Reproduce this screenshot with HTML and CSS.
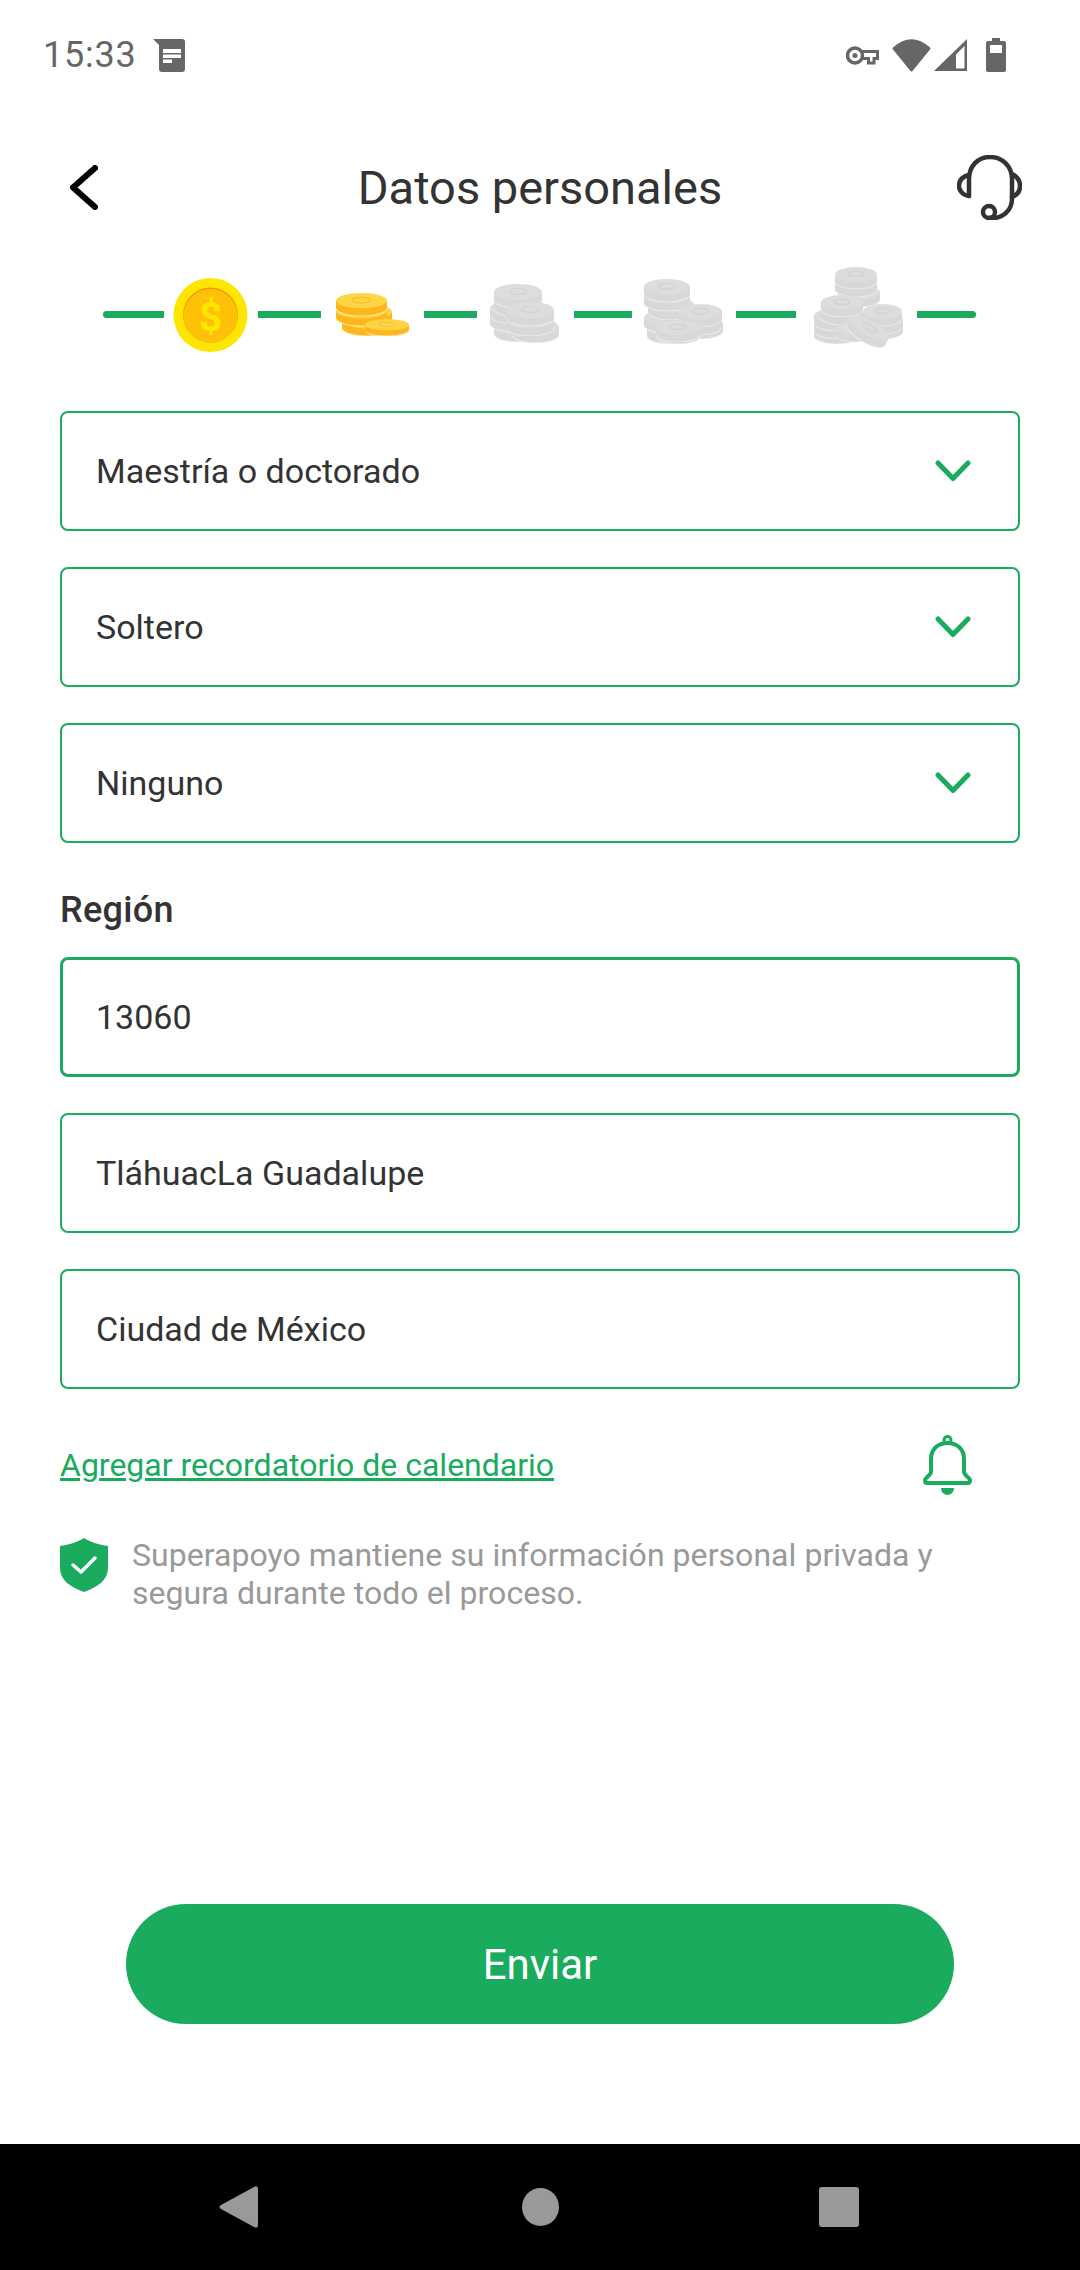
FILE: index.html
```html
<!DOCTYPE html>
<html lang="es">
<head>
    <meta charset="UTF-8">
    <meta name="viewport" content="width=device-width, initial-scale=1.0">
    <title>Datos personales</title>
    <link rel="stylesheet" href="styles.css">
</head>
<body>
    <svg class="defs" width="0" height="0">
        <symbol id="coin" viewBox="0 0 50 24" preserveAspectRatio="none">
            <path d="M0 8V16C0 20 11 24 25 24S50 20 50 16V8Z" fill="currentColor"/>
            <ellipse cx="25" cy="8" rx="25" ry="8" fill="var(--coin-top)"/>
            <path d="M0 16C0 20 11 24 25 24S50 20 50 16" fill="none" stroke="var(--coin-seam)" stroke-width="1"/>
            <ellipse cx="25" cy="7.5" rx="9" ry="3" fill="none" stroke="var(--coin-mark)" stroke-width="1.2"/>
        </symbol>
    </svg>

    <div class="page">
        <div class="status-bar">
            <span class="time">15:33</span>
            <svg class="doc-icon" width="32" height="33" viewBox="0 0 32 33">
                <path d="M0 0H29A3 3 0 0 1 32 3V30A3 3 0 0 1 29 33H9A3 3 0 0 1 6 30V6Z" fill="#666"/>
                <path d="M10 10H28V14H10ZM10 15.5H28V19H10ZM10 20.5H19V24H10Z" fill="#fff"/>
            </svg>
            <div class="status-right">
                <svg width="33" height="19" viewBox="0 0 33 19">
                    <circle cx="9" cy="9.5" r="7.5" fill="none" stroke="#666" stroke-width="3.5"/>
                    <circle cx="9" cy="9.5" r="2.5" fill="#666"/>
                    <path d="M16 5.5H31.5V12.5H28V17H22.5V12.5H16" fill="none" stroke="#666" stroke-width="3"/>
                </svg>
                <svg class="wifi" width="39" height="33" viewBox="0 0 39 33">
                    <path d="M1 8.5Q19.5-8 38 8.5Q39 9.500 38 10.500L20.500 32Q19.500 33 18.500 32L1 10.500Q0 9.500 1 8.500Z" fill="#666"/>
                </svg>
                <svg class="signal" width="33" height="32" viewBox="0 0 33 32">
                    <path d="M33 0V32H0Z" fill="#666"/>
                    <path d="M30.5 7V29.5H22V15.5Z" fill="#fff"/>
                </svg>
                <svg class="battery" width="20" height="34" viewBox="0 0 20 34">
                    <path d="M6 0H14V3H18A2 2 0 0 1 20 5V32A2 2 0 0 1 18 34H2A2 2 0 0 1 0 32V5A2 2 0 0 1 2 3H6Z" fill="#666"/>
                    <rect x="4" y="7" width="12" height="8" fill="#fff"/>
                </svg>
            </div>
        </div>

        <div class="header">
            <svg class="back" width="28" height="45" viewBox="0 0 28 45">
                <path d="M25 3L3 22.5L25 42" fill="none" stroke="#000" stroke-width="6" stroke-linecap="round" stroke-linejoin="round"/>
            </svg>
            <h1 class="title">Datos personales</h1>
            <svg class="headset" width="65" height="65" viewBox="0 0 65 65" fill="none" stroke="#333" stroke-width="4.500" stroke-linecap="round">
                <path d="M12 41V24C12 11 21 2 33 2S55 11 55 24V44C55 55 46 63 36 63H32"/>
                <path d="M12 20C4 22 2 27 2 31S5 40 12 41"/>
                <path d="M55 19C61 22 63 26 63 31S60 40 55 42"/>
                <circle cx="32" cy="57" r="6"/>
            </svg>
        </div>

        <div class="stepper">
            <span class="line line-first"></span>
            <svg width="94" height="100" viewBox="164 264 94 100">
                <circle cx="210.5" cy="315" r="37" fill="#ffe600"/>
                <circle cx="210.5" cy="315" r="27.5" fill="#f59a00"/>
                <circle cx="210.5" cy="316" r="27" fill="#ffc107"/>
                <text x="210.5" y="330.5" text-anchor="middle" class="dollar">$</text>
            </svg>
            <span class="line line-2"></span>
            <svg class="coins gold" width="103" height="100" viewBox="321 264 103 100">
                <use href="#coin" x="342" y="313" width="50" height="23"/>
                <use href="#coin" x="342" y="304" width="50" height="23"/>
                <use href="#coin" x="336" y="303" width="51" height="23"/>
                <use href="#coin" x="336" y="293" width="51" height="23"/>
                <use href="#coin" x="365" y="319" width="44" height="17"/>
            </svg>
            <span class="line line-3"></span>
            <svg class="coins gray" width="97" height="100" viewBox="477 264 97 100">
                <use href="#coin" x="494" y="319" width="48" height="23"/>
                <use href="#coin" x="490" y="308" width="48" height="24"/>
                <use href="#coin" x="490" y="300" width="48" height="24"/>
                <use href="#coin" x="494" y="293" width="48" height="24"/>
                <use href="#coin" x="494" y="284" width="48" height="24"/>
                <use href="#coin" x="512" y="319" width="47" height="24"/>
                <use href="#coin" x="506" y="312" width="48" height="24"/>
                <use href="#coin" x="506" y="302" width="48" height="24"/>
            </svg>
            <span class="line line-4"></span>
            <svg class="coins gray" width="104" height="100" viewBox="632 264 104 100">
                <use href="#coin" x="647" y="321" width="46" height="23"/>
                <use href="#coin" x="644" y="310" width="46" height="23"/>
                <use href="#coin" x="648" y="297" width="46" height="23"/>
                <use href="#coin" x="644" y="288" width="46" height="23"/>
                <use href="#coin" x="644" y="279" width="46" height="23"/>
                <use href="#coin" x="680" y="316" width="43" height="23"/>
                <use href="#coin" x="678" y="312" width="44" height="23"/>
                <use href="#coin" x="678" y="304" width="44" height="23"/>
                <use href="#coin" x="656" y="322" width="44" height="22"/>
                <use href="#coin" x="656" y="320" width="44" height="22"/>
            </svg>
            <span class="line line-5"></span>
            <svg class="coins gray" width="121" height="100" viewBox="796 264 121 100">
                <use href="#coin" x="838" y="285" width="42" height="22"/>
                <use href="#coin" x="835" y="275" width="42" height="22"/>
                <use href="#coin" x="835" y="267" width="42" height="22"/>
                <use href="#coin" x="814" y="321" width="46" height="23"/>
                <use href="#coin" x="814" y="316" width="46" height="23"/>
                <use href="#coin" x="814" y="308" width="46" height="23"/>
                <use href="#coin" x="821" y="303" width="42" height="22"/>
                <use href="#coin" x="821" y="295" width="42" height="22"/>
                <use href="#coin" x="863" y="317" width="40" height="22"/>
                <use href="#coin" x="863" y="312" width="40" height="22"/>
                <use href="#coin" x="863" y="304" width="39" height="22"/>
                <use href="#coin" x="835" y="322" width="42" height="20"/>
                <use href="#coin" x="846" y="320" width="44" height="23" transform="rotate(30 868 331)"/>
            </svg>
            <span class="line line-last"></span>
        </div>

        <div class="form">
            <div class="field">
                <span>Maestría o doctorado</span>
                <svg class="chevron" width="36" height="22" viewBox="0 0 36 22"><path d="M3 3L18 18.500L33 3"/></svg>
            </div>
            <div class="field">
                <span>Soltero</span>
                <svg class="chevron" width="36" height="22" viewBox="0 0 36 22"><path d="M3 3L18 18.500L33 3"/></svg>
            </div>
            <div class="field">
                <span>Ninguno</span>
                <svg class="chevron" width="36" height="22" viewBox="0 0 36 22"><path d="M3 3L18 18.500L33 3"/></svg>
            </div>

            <div class="section-label">Región</div>

            <div class="field field-active"><span>13060</span></div>
            <div class="field"><span>TláhuacLa Guadalupe</span></div>
            <div class="field"><span>Ciudad de México</span></div>

            <div class="reminder">
                <a class="reminder-link" href="#">Agregar recordatorio de calendario</a>
                <svg class="bell" width="49" height="60" viewBox="0 0 49 60">
                    <path d="M8 37V24C8 14 15 8 24.5 8S41 14 41 24V37C41 40 47 43 47 45C47 47 46 48 45 48H4C3 48 2 47 2 45C2 43 8 40 8 37Z" fill="none" stroke="#1aab5e" stroke-width="4" stroke-linejoin="round"/>
                    <circle cx="24.5" cy="5" r="3.5" fill="none" stroke="#1aab5e" stroke-width="3"/>
                    <path d="M18 53H31A6.5 7 0 0 1 18 53Z" fill="#1aab5e"/>
                </svg>
            </div>

            <div class="notice">
                <svg class="shield" width="48" height="54" viewBox="0 0 48 54">
                    <path d="M24 0C30 4 40 7 48 8V30C48 42 38 49 24 54C10 49 0 42 0 30V8C8 7 18 4 24 0Z" fill="#1aab5e"/>
                    <path d="M13 27L21 34L35 20" fill="none" stroke="#fff" stroke-width="3.5" stroke-linecap="round" stroke-linejoin="round"/>
                </svg>
                <p>Superapoyo mantiene su información personal privada y segura durante todo el proceso.</p>
            </div>
        </div>

        <button class="submit">Enviar</button>

        <div class="nav-bar">
            <svg class="nav-back" width="39" height="42" viewBox="0 0 39 42">
                <path d="M2 19L35 1Q39 -1 39 3V39Q39 43 35 41L2 23Q-1 21 2 19Z" fill="#999"/>
            </svg>
            <span class="nav-home"></span>
            <span class="nav-recent"></span>
        </div>
    </div>
</body>
</html>
```

FILE: styles.css
```css
* { box-sizing: border-box; }

body {
    margin: 0;
    background-color: #fff;
    font-family: Roboto, "Liberation Sans", sans-serif;
    color: #333;
}

.defs { position: absolute; }

.page {
    width: 1080px;
    height: 2270px;
    display: flex;
    flex-direction: column;
    overflow: hidden;
}

/* status bar */
.status-bar {
    height: 110px;
    padding: 0 74px 0 43px;
    display: flex;
    align-items: center;
    flex-shrink: 0;
}
.time { font-size: 36px; color: #666; letter-spacing: 0.8px; }
.doc-icon { margin-left: 16px; }
.status-right {
    margin-left: auto;
    display: flex;
    align-items: center;
}
.wifi { margin-left: 13px; }
.signal { margin-left: 3px; }
.battery { margin-left: 19px; }

/* header */
.header {
    height: 154px;
    padding: 0 58px;
    display: grid;
    grid-template-columns: 1fr auto 1fr;
    align-items: center;
    flex-shrink: 0;
}
.back { margin-left: 12px; }
.title {
    margin: 0;
    font-size: 47px;
    font-weight: 400;
    color: #333;
}
.headset { justify-self: end; }

/* coin steps */
.stepper {
    height: 100px;
    padding-left: 103px;
    display: flex;
    align-items: center;
    flex-shrink: 0;
}
.line { height: 7px; background-color: #1aab5e; flex-shrink: 0; }
.line-first { width: 61px; border-radius: 4px 0 0 4px; }
.line-2 { width: 63px; }
.line-3 { width: 53px; }
.line-4 { width: 58px; }
.line-5 { width: 60px; }
.line-last { width: 59px; border-radius: 0 4px 4px 0; }
.dollar { font-size: 41px; font-weight: 700; fill: #ffe600; }
.gold { color: #ffb61e; --coin-top: #ffd545; --coin-seam: #ffe9a8; --coin-mark: #f5c030; }
.gray { color: #d8d8d8; --coin-top: #dddddd; --coin-seam: #efefef; --coin-mark: #d2d2d2; }

/* form */
.form {
    padding: 47px 60px 0;
    display: flex;
    flex-direction: column;
}
.field {
    height: 120px;
    margin-bottom: 36px;
    padding: 0 47px 0 34px;
    display: flex;
    align-items: center;
    justify-content: space-between;
    border: 2px solid #1aab5e;
    border-radius: 8px;
    font-size: 34px;
    color: #333;
}
.field-active { border-width: 3px; padding-left: 33px; }
.chevron { fill: none; stroke: #1aab5e; stroke-width: 5; stroke-linecap: round; stroke-linejoin: round; }

.section-label {
    height: 40px;
    margin: 11px 0 27px;
    font-size: 36px;
    font-weight: 500;
    letter-spacing: 0.3px;
    line-height: 40px;
    color: #333;
}

.reminder {
    margin-top: 10px;
    padding-right: 48px;
    display: flex;
    align-items: center;
    justify-content: space-between;
}
.reminder-link {
    font-size: 32px;
    color: #1aab5e;
    text-decoration: underline;
}

.notice {
    margin-top: 41px;
    display: flex;
    align-items: flex-start;
    gap: 24px;
}
.shield { margin-top: 2px; flex-shrink: 0; }
.notice p {
    margin: 0;
    font-size: 32px;
    letter-spacing: 0.05px;
    line-height: 38px;
    color: #999;
}

/* submit */
.submit {
    display: block;
    width: 828px;
    height: 120px;
    margin: auto auto 120px;
    border: 0;
    border-radius: 60px;
    background-color: #1aab5e;
    color: #fff;
    font-family: inherit;
    font-size: 42px;
    flex-shrink: 0;
}

/* android nav */
.nav-bar {
    height: 126px;
    padding-left: 219px;
    display: flex;
    align-items: center;
    background-color: #000;
    flex-shrink: 0;
}
.nav-home {
    width: 37px;
    height: 38px;
    margin-left: 264px;
    border-radius: 50%;
    background-color: #999;
}
.nav-recent {
    width: 40px;
    height: 40px;
    margin-left: 260px;
    border-radius: 3px;
    background-color: #999;
}
```
